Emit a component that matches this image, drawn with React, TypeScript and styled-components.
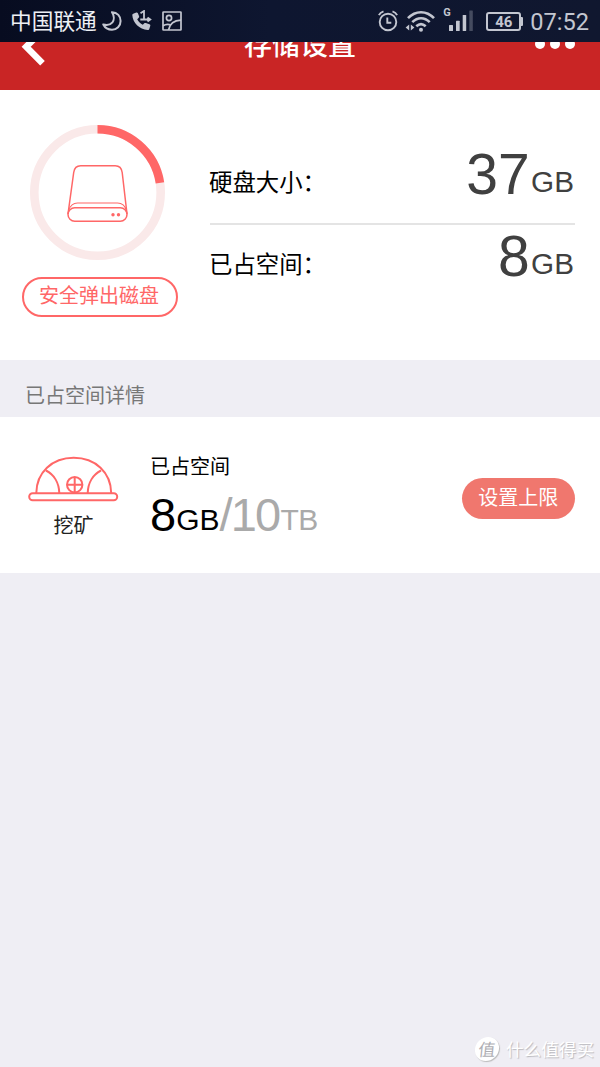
import React from 'react';
import styled, { createGlobalStyle } from 'styled-components';

const coral = '#ff6767';
const cjk = "'Noto Sans CJK SC', sans-serif";
const latin = "'Liberation Sans', Arial, 'Noto Sans CJK SC', sans-serif";

const GlobalStyle = createGlobalStyle`
  * { box-sizing: border-box; }
  body { margin: 0; background: #efeef4; font-family: ${cjk}; }
  svg { display: block; flex: none; }
`;

const Page = styled.div`
  width: 600px;
  height: 1067px;
  display: flex;
  flex-direction: column;
  overflow: hidden;
  background: #efeef4;
`;

const StatusBar = styled.div`
  height: 41.5px;
  flex: none;
  display: flex;
  align-items: center;
  padding: 0 11px 0 10px;
  color: #c3c6d0;
  background: linear-gradient(90deg, #070c20, #0e1630 45%, #10172f);
`;

const Carrier = styled.span`
  font-size: 21.7px;
  line-height: 38px;
  margin: 0 5px 2px 0;
  color: #eef0f5;
`;

const StatusIcons = styled.div<{ $gap: number }>`
  display: flex;
  align-items: center;
  gap: ${(p) => p.$gap}px;
`;

const SystemStatus = styled.div`
  display: flex;
  align-items: center;
  margin-left: auto;
`;

const Clock = styled.span`
  font-family: Roboto, sans-serif;
  font-size: 23.6px;
  line-height: 38px;
  margin: 2px 0 0 7px;
`;

const Header = styled.header`
  height: 48.5px;
  flex: none;
  overflow: hidden;
  background: #c92525;
`;

const HeaderRow = styled.div`
  height: 50px;
  margin-top: -21px;
  padding: 0 25px 0 21px;
  display: grid;
  grid-template-columns: 60px 1fr 60px;
  align-items: center;
  color: #fff;
`;

const Title = styled.h1`
  margin: 0 0 6px 4px;
  text-align: center;
  font-size: 28px;
  line-height: 44px;
  font-weight: 500;
`;

const Dots = styled.div`
  display: flex;
  justify-content: flex-end;
  gap: 5px;
  margin-bottom: 3px;
`;

const Dot = styled.span`
  width: 10px;
  height: 10px;
  border-radius: 50%;
  background: #fff;
`;

const Summary = styled.section`
  height: 270px;
  flex: none;
  display: flex;
  padding: 35px 26px 0 22px;
  background: #fff;
`;

const DiskColumn = styled.div`
  width: 156px;
  display: flex;
  flex-direction: column;
  align-items: flex-start;
`;

const Gauge = styled.div`
  margin-left: 8px;
  height: 152px;
`;

const EjectButton = styled.button`
  width: 156px;
  height: 40px;
  padding: 0 2px 4px 0;
  border: 2px solid ${coral};
  border-radius: 20px;
  background: #fff;
  color: ${coral};
  font: 20px/32px ${cjk};
`;

const Stats = styled.div`
  flex: 1;
  margin: 0 -1px 0 32px;
`;

const Stat = styled.div<{ $first?: boolean }>`
  height: ${(p) => (p.$first ? 100 : 82)}px;
  padding: ${(p) => (p.$first ? 18 : 0)}px 1px 0 0;
  display: flex;
  justify-content: space-between;
  border-bottom: ${(p) => (p.$first ? '2px solid #e4e4e4' : '0')};
`;

const StatLabel = styled.span`
  font-size: 23.4px;
  line-height: 76px;
  margin-left: -1px;
  color: #000;
`;

const Unit = styled.span`
  font-size: 30px;
  line-height: 1;
  vertical-align: 1.5px;
`;

const StatValue = styled.span`
  font-family: ${latin};
  font-size: 57px;
  line-height: 62px;
  color: #404040;

  ${Unit} {
    font-size: 29.7px;
    margin-left: 1.5px;
    vertical-align: 2px;
  }
`;

const SectionLabel = styled.h2`
  margin: 0;
  height: 57px;
  flex: none;
  padding: 9px 25px 0;
  font-size: 20px;
  line-height: 52px;
  font-weight: 400;
  color: #777;
`;

const UsageRow = styled.section`
  height: 156px;
  flex: none;
  display: flex;
  padding: 0 25px 0 28px;
  background: #fff;
`;

const MiningApp = styled.div`
  width: 91px;
  padding-top: 39px;
  display: flex;
  flex-direction: column;
  align-items: center;
`;

const AppName = styled.span`
  font-size: 20px;
  line-height: 30px;
  margin-top: 8px;
  color: #222;
`;

const Usage = styled.div`
  flex: 1;
  margin-left: 31px;
  padding-top: 33px;
`;

const UsageTitle = styled.div`
  font-size: 20px;
  line-height: 32px;
  color: #000;
`;

const UsageValue = styled.div`
  font-family: ${latin};
  font-size: 47px;
  line-height: 60px;
  margin-top: 3px;
  color: #000;
`;

const Limit = styled.span`
  color: #aaa;
  letter-spacing: -1.8px;

  ${Unit} {
    margin-left: 1px;
    letter-spacing: -0.4px;
  }
`;

const LimitButton = styled.button`
  align-self: flex-start;
  margin-top: 61px;
  width: 113.5px;
  height: 40.5px;
  padding: 0 0 3px;
  border: 0;
  border-radius: 21px;
  background: #f0776e;
  color: #fff;
  font: 20px/36px ${cjk};
`;

const Footer = styled.footer`
  margin-top: auto;
  height: 36px;
  padding-right: 6px;
  display: flex;
  justify-content: flex-end;
  align-items: center;
  gap: 7px;
  color: #fff;
  font-size: 17.6px;
  line-height: 34px;
  text-shadow: 1px 1px 1px #b9b9be;
`;

const Badge = styled.span`
  width: 24px;
  height: 24px;
  border-radius: 50%;
  background: #fff;
  box-shadow: 1px 1px 1px #bbb;
  color: #aeaeb3;
  text-align: center;
  font-size: 17px;
  line-height: 23px;
  text-shadow: none;
  transform: skewX(-6deg);
`;

const MoonIcon = () => (
  <svg width="20" height="22" viewBox="0 0 20 22" fill="none" stroke="currentColor" strokeWidth="2" strokeLinejoin="round">
    <path d="M10 2.200C15.400 2.400 18.600 6.200 18.600 11c0 5-3.800 8.700-8.600 8.700-3.800 0-7.200-2.200-8.700-5.200 3.600 1 7.200.2 9.100-2.100C12.300 9.900 12.200 5.600 10 2.200Z" />
  </svg>
);

const CallIcon = () => (
  <svg width="20" height="22" viewBox="0 0 20 22" fill="currentColor">
    <path d="M1.200 3.800 4.300 2.500c.7-.2 1.300.1 1.600.8l1.200 3c.2.600 0 1.100-.4 1.500L5.200 9.200c1.300 2.400 3.200 4.300 5.600 5.600l1.500-1.500c.4-.4 1-.5 1.500-.3l3.600 1.200c.7.200 1.100.8.900 1.500l-1 3.200c-.2.700-.8 1.200-1.600 1.100C7.500 19.600.600 12.500.300 5c0-.500.300-1 .900-1.200Z" />
    <path d="M8.500 3.300 12 1v8M8.300 9.500h9.500M15.500 7.500 18.300 9.500l-2.800 2" fill="none" stroke="currentColor" strokeWidth="1.800" />
  </svg>
);

const PictureIcon = () => (
  <svg width="20" height="20" viewBox="0 0 20 20" fill="none" stroke="currentColor" strokeWidth="1.700">
    <rect x="1" y="1" width="18" height="18" rx="0.500" />
    <circle cx="7" cy="7" r="2.600" />
    <path d="M6.500 19C7.500 13.500 11.500 9.500 19 9.200M1 14.800c2.800-1.900 5.700-1.900 8.200-.5" />
  </svg>
);

const AlarmIcon = () => (
  <svg width="20" height="22" viewBox="0 0 20 22" fill="none" stroke="currentColor" strokeWidth="1.900">
    <circle cx="10" cy="12" r="8.300" />
    <path d="M9.300 7.500v5.200h4M.900 5.200C1.800 3.300 3.400 2 5.500 1.300M19.100 5.200C18.200 3.300 16.600 2 14.500 1.300" />
  </svg>
);

const WifiIcon = () => (
  <svg width="31" height="22" viewBox="0 0 31 22" fill="none" stroke="currentColor" strokeWidth="2.600">
    <path d="M3 8.200c7.500-8 18.500-8 26 0M7.300 12.200c5.200-5.200 12.200-5.200 17.400 0M11.300 16.300c3-2.800 6.400-2.800 9.400 0" />
    <circle cx="16" cy="19.700" r="2" fill="currentColor" stroke="none" />
    <path d="M4.200 14.500v6L.600 17.500zM5.800 14.500v6l3.600-3z" fill="currentColor" stroke="none" />
  </svg>
);

const SignalG = styled.span`
  align-self: flex-start;
  width: 9px;
  margin: 1px -4px 0 0;
  font: 700 11px/12px Roboto, sans-serif;
`;

const SignalGroup = styled.div`
  display: flex;
  height: 25px;
  align-items: flex-end;
  margin-bottom: 4px;
`;

const SignalBars = () => (
  <svg width="26" height="21" viewBox="0 0 26 21" fill="currentColor">
    <rect x="1" y="15" width="4" height="6" rx="0.500" />
    <rect x="8" y="10.700" width="3.700" height="10.300" rx="0.500" />
    <rect x="14.700" y="5" width="3.500" height="16" rx="0.500" />
    <rect x="21.300" y="0.500" width="3.500" height="20.500" rx="0.500" opacity="0.300" />
  </svg>
);

const BatteryGroup = styled.div`
  display: flex;
  align-items: center;
  margin: 1px 0 0 12px;

  &::after {
    content: '';
    width: 2px;
    height: 9px;
    border-radius: 0 1px 1px 0;
    background: currentColor;
  }
`;

const Battery = styled.div`
  width: 35px;
  height: 19px;
  border: 2px solid currentColor;
  border-radius: 3px;
  font-family: Roboto, sans-serif;
  font-size: 15px;
  font-weight: 700;
  line-height: 16px;
  text-align: center;
`;

const BackIcon = () => (
  <svg width="26" height="40" viewBox="0 0 26 40" fill="none" stroke="#fff" strokeWidth="6.500">
    <path d="M21.500 4.300 5.200 20.800l16.300 16.500" />
  </svg>
);

const DiskGauge = ({ used }: { used: number }) => {
  const radius = 63.2;
  const length = 2 * Math.PI * radius;
  return (
    <svg width="136" height="136" viewBox="0 0 136 136" fill="none">
      <circle cx="67.500" cy="67.500" r={radius} stroke="#fae9e9" strokeWidth="8.600" />
      <circle
        cx="67.500"
        cy="67.500"
        r={radius}
        stroke={coral}
        strokeWidth="8.600"
        strokeDasharray={`${length * used} ${length}`}
        transform="rotate(-90 67.500 67.500)"
      />
      <g stroke={coral} strokeWidth="1.500">
        <path d="M38 89 43.700 47.500c.6-4.400 3-6.700 7-6.700h34.500c4 0 6.400 2.300 7 6.700L97 89" />
        <path d="M38.500 85.500c1.800-5 4.500-7.500 9-7.500h40c4.500 0 7.500 2.500 9 7.500" strokeWidth="1.100" />
        <rect x="38" y="82.800" width="59" height="13.400" rx="6.700" />
      </g>
      <circle cx="83" cy="89.700" r="1.700" fill={coral} />
      <circle cx="88.500" cy="89.700" r="1.700" fill={coral} />
    </svg>
  );
};

const HelmetIcon = () => (
  <svg width="91" height="46" viewBox="0 0 91 46" fill="none" stroke={coral} strokeWidth="2">
    <rect x="1.200" y="37.200" width="88" height="7" rx="3.500" />
    <path d="M8.300 37C8.500 16.500 24 1.700 45.700 1.700S83 16.500 83.200 37" />
    <path d="M18 14.500C26 18.500 31 27 31.300 37M73 14.500C65 18.500 60 27 59.700 37" />
    <circle cx="46.700" cy="28.700" r="7.700" />
    <path d="M46.700 21v15.400M39 28.700h15.400" />
  </svg>
);

export default function App() {
  return (
    <Page>
      <GlobalStyle />
      <StatusBar>
        <Carrier>中国联通</Carrier>
        <StatusIcons $gap={10}>
          <MoonIcon />
          <CallIcon />
          <PictureIcon />
        </StatusIcons>
        <SystemStatus>
          <StatusIcons $gap={7}>
            <AlarmIcon />
            <WifiIcon />
            <SignalGroup>
              <SignalG>G</SignalG>
              <SignalBars />
            </SignalGroup>
          </StatusIcons>
          <BatteryGroup>
            <Battery>46</Battery>
          </BatteryGroup>
          <Clock>07:52</Clock>
        </SystemStatus>
      </StatusBar>
      <Header>
        <HeaderRow>
          <BackIcon />
          <Title>存储设置</Title>
          <Dots>
            <Dot />
            <Dot />
            <Dot />
          </Dots>
        </HeaderRow>
      </Header>
      <Summary>
        <DiskColumn>
          <Gauge>
            <DiskGauge used={0.225} />
          </Gauge>
          <EjectButton>安全弹出磁盘</EjectButton>
        </DiskColumn>
        <Stats>
          <Stat $first>
            <StatLabel>硬盘大小：</StatLabel>
            <StatValue>
              37<Unit>GB</Unit>
            </StatValue>
          </Stat>
          <Stat>
            <StatLabel>已占空间：</StatLabel>
            <StatValue>
              8<Unit>GB</Unit>
            </StatValue>
          </Stat>
        </Stats>
      </Summary>
      <SectionLabel>已占空间详情</SectionLabel>
      <UsageRow>
        <MiningApp>
          <HelmetIcon />
          <AppName>挖矿</AppName>
        </MiningApp>
        <Usage>
          <UsageTitle>已占空间</UsageTitle>
          <UsageValue>
            8<Unit>GB</Unit>
            <Limit>
              /10<Unit>TB</Unit>
            </Limit>
          </UsageValue>
        </Usage>
        <LimitButton>设置上限</LimitButton>
      </UsageRow>
      <Footer>
        <Badge>值</Badge>
        什么值得买
      </Footer>
    </Page>
  );
}
